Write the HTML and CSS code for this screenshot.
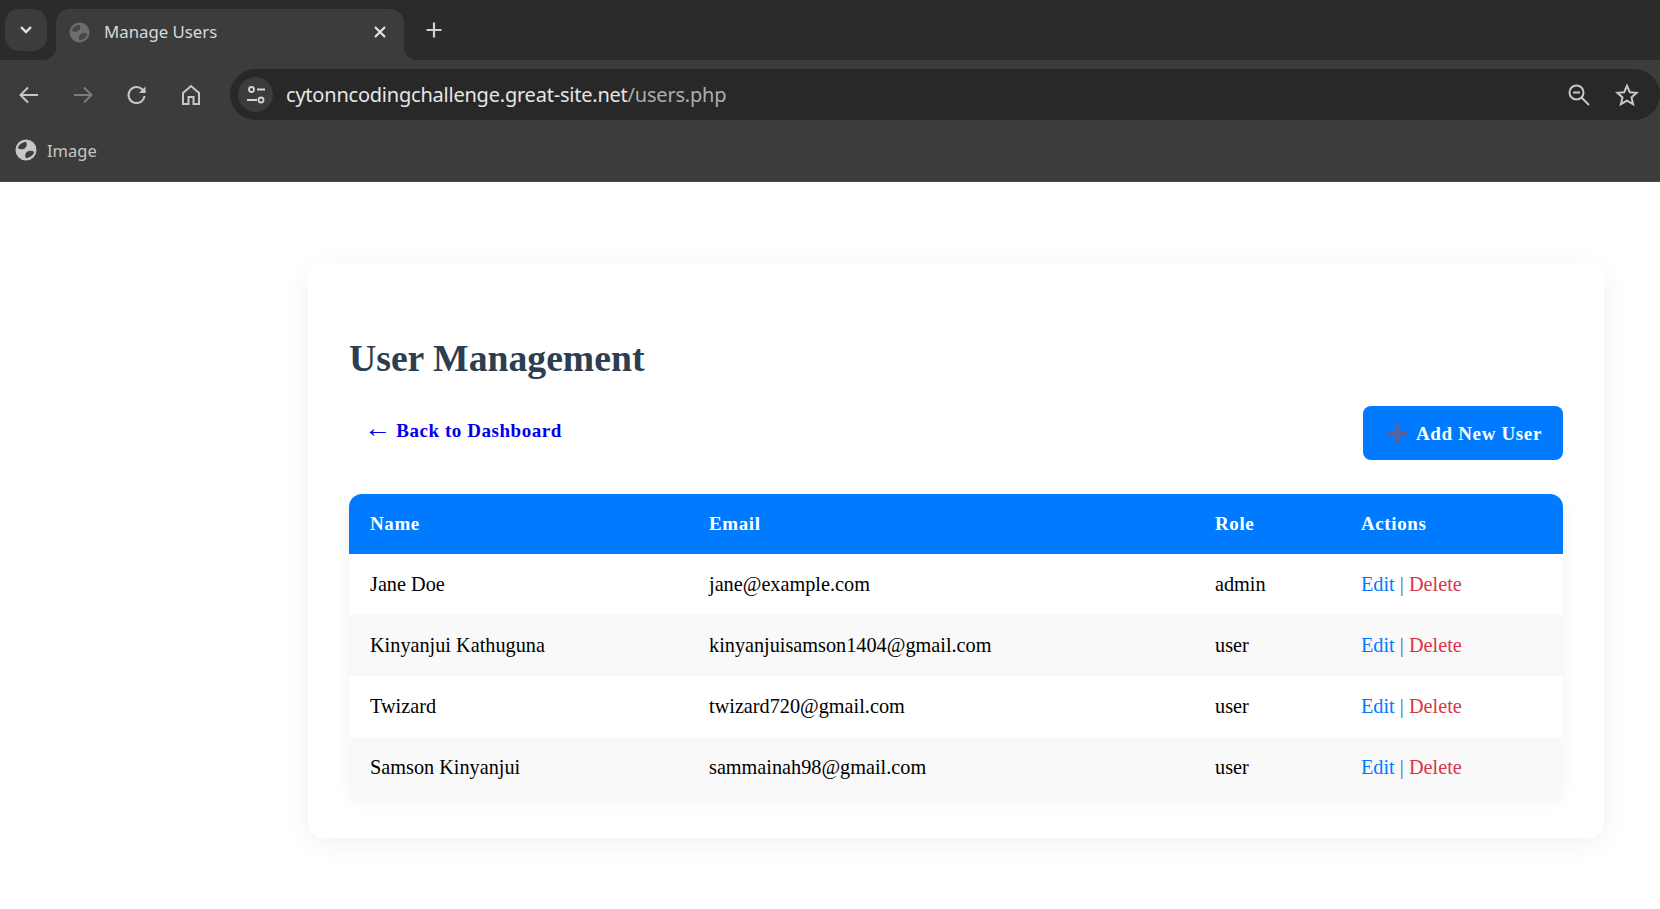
FILE: index.html
```html
<!DOCTYPE html>
<html lang="en">
<head>
<meta charset="utf-8">
<title>Manage Users</title>
<link rel="stylesheet" href="styles.css">
</head>
<body>
<header class="chrome">
  <div class="tabstrip">
    <div class="tab-search">
      <svg class="icon-s" viewBox="0 0 16 16"><path d="M3 5 8 10l5-5" fill="none" stroke="#e3e3e3" stroke-width="2.400"/></svg>
    </div>
    <div class="tab">
      <svg class="favicon" viewBox="0 0 22 22"><circle cx="11" cy="11" r="10.500" fill="#6a6d72"/><path d="M2.800 9C4 5.500 7.500 3.200 11 2.800c1.500 2.700.8 5.300-1.500 6.700-2.200 1.300-4.700 1.100-6.700-.5zM19.200 13c-1.200 3.500-4.700 5.800-8.200 6.200-1.500-2.700-.8-5.300 1.500-6.700 2.200-1.300 4.700-1.100 6.700.5z" fill="#45484b"/></svg>
      <span class="tab-title">Manage Users</span>
      <svg class="tab-close" viewBox="0 0 14 14"><path d="M2 2l10 10M12 2 2 12" stroke="#e3e3e3" stroke-width="2.200"/></svg>
    </div>
    <svg class="newtab" viewBox="0 0 18 18"><path d="M9 1.500v15M1.500 9h15" stroke="#d0d0d0" stroke-width="2.200"/></svg>
  </div>
  <div class="toolbar">
    <div class="nav">
      <svg class="nav-icon" viewBox="0 0 24 24"><path d="M21 12H4M11 4.500 3.500 12l7.500 7.500" fill="none" stroke="#c7c7c7" stroke-width="2"/></svg>
      <svg class="nav-icon" viewBox="0 0 24 24"><path d="M3 12h17M13 4.500l7.500 7.500-7.500 7.500" fill="none" stroke="#7b7b7b" stroke-width="2"/></svg>
      <svg class="nav-icon" viewBox="0 0 24 24"><path d="M19.500 13a8 8 0 1 1-2.200-6.500L20 9" fill="none" stroke="#c7c7c7" stroke-width="2"/><path d="M20.500 3.500v6.500H14z" fill="#c7c7c7"/></svg>
      <svg class="nav-icon" viewBox="0 0 24 24"><path d="M4 21V10l8-7 8 7v11h-5.500v-7h-5v7z" fill="none" stroke="#c7c7c7" stroke-width="2"/></svg>
    </div>
    <div class="omnibox">
      <span class="site-btn">
        <svg class="site-icon" viewBox="0 0 20 20"><circle cx="5.500" cy="4.500" r="2.500" fill="none" stroke="#d5d5d5" stroke-width="1.800"/><path d="M11 4.500h8M1 15h10" stroke="#d5d5d5" stroke-width="1.800"/><circle cx="15" cy="15" r="2.500" fill="none" stroke="#d5d5d5" stroke-width="1.800"/></svg>
      </span>
      <span class="url">cytonncodingchallenge.great-site.net<span class="url-path">/users.php</span></span>
      <svg class="omni-icon zoom-icon" viewBox="0 0 24 24"><circle cx="9.500" cy="9.500" r="7" fill="none" stroke="#c7c7c7" stroke-width="2"/><path d="M6 9.500h7M14.500 14.500l7.500 7.500" stroke="#c7c7c7" stroke-width="2"/></svg>
      <svg class="omni-icon star-icon" viewBox="0 0 24 24"><path d="m12 2.800 2.800 6.400 6.900.6-5.200 4.600 1.600 6.800-6.100-3.600-6.100 3.600 1.600-6.800-5.200-4.600 6.900-.6z" fill="none" stroke="#c7c7c7" stroke-width="2"/></svg>
    </div>
  </div>
  <div class="bookmarks">
    <svg class="bm-icon" viewBox="0 0 22 22"><circle cx="11" cy="11" r="10.500" fill="#c7c7c7"/><path d="M2.800 9C4 5.500 7.500 3.200 11 2.800c1.500 2.700.8 5.300-1.500 6.700-2.200 1.300-4.700 1.100-6.700-.5zM19.200 13c-1.200 3.500-4.700 5.800-8.200 6.200-1.500-2.700-.8-5.300 1.500-6.700 2.200-1.300 4.700-1.100 6.700.5z" fill="#3c3c3c"/></svg>
    <span class="bm-label">Image</span>
  </div>
</header>
<main class="page">
  <section class="card">
    <h1 class="title">User Management</h1>
    <div class="actions-row">
      <a class="back" href="#"><span class="arrow">←</span> Back to Dashboard</a>
      <a class="add-btn" href="#">
        <svg class="plus" viewBox="0 0 20 20"><path d="M10 0v20M0 10h20" stroke="#5f5f9e" stroke-width="4"/></svg>
        Add New User
      </a>
    </div>
    <table class="users">
      <colgroup>
        <col class="c-name"><col class="c-email"><col class="c-role"><col class="c-actions">
      </colgroup>
      <thead>
        <tr><th>Name</th><th>Email</th><th>Role</th><th>Actions</th></tr>
      </thead>
      <tbody>
        <tr><td>Jane Doe</td><td>jane@example.com</td><td>admin</td><td><a class="edit" href="#">Edit</a> <span class="sep">|</span> <a class="del" href="#">Delete</a></td></tr>
        <tr><td>Kinyanjui Kathuguna</td><td>kinyanjuisamson1404@gmail.com</td><td>user</td><td><a class="edit" href="#">Edit</a> <span class="sep">|</span> <a class="del" href="#">Delete</a></td></tr>
        <tr><td>Twizard</td><td>twizard720@gmail.com</td><td>user</td><td><a class="edit" href="#">Edit</a> <span class="sep">|</span> <a class="del" href="#">Delete</a></td></tr>
        <tr><td>Samson Kinyanjui</td><td>sammainah98@gmail.com</td><td>user</td><td><a class="edit" href="#">Edit</a> <span class="sep">|</span> <a class="del" href="#">Delete</a></td></tr>
      </tbody>
    </table>
  </section>
</main>
</body>
</html>
```
FILE: styles.css
```css
* { box-sizing: border-box; }
html, body { margin: 0; height: 100%; }
body { background: #fff; font-family: "Liberation Serif", "Times New Roman", serif; overflow: hidden; }

.chrome { font-family: "Noto Sans", "Open Sans", sans-serif; background: #3c3c3c; border-bottom: 1px solid #4a4a4a; }

.tabstrip { height: 60px; background: #2b2b2b; display: flex; align-items: flex-start; padding: 9px 0 0 5px; }
.tab-search { width: 42px; height: 42px; border-radius: 14px; background: #3c3c3c; display: flex; align-items: center; justify-content: center; }
.icon-s { width: 16px; height: 16px; }
.tab { position: relative; margin-left: 9px; width: 348px; height: 51px; background: #3c3c3c; border-radius: 14px 14px 0 0; display: flex; align-items: center; padding: 0 17px 0 13px; }
.tab::before, .tab::after { content: ""; position: absolute; bottom: 0; width: 14px; height: 14px; }
.tab::before { left: -14px; background: radial-gradient(circle at 0 0, #2b2b2b 14px, #3c3c3c 14.500px); }
.tab::after { right: -14px; background: radial-gradient(circle at 100% 0, #2b2b2b 14px, #3c3c3c 14.500px); }
.favicon { width: 21px; height: 21px; margin-top: -4px; flex: none; }
.tab-title { margin-left: 14px; font-size: 16.800px; color: #d8d8d8; flex: 1; margin-top: -6px; }
.tab-close { width: 14px; height: 14px; margin: -6px 0 0; }
.newtab { width: 18px; height: 18px; margin: 12px 0 0 21px; }

.toolbar { height: 69px; display: flex; align-items: center; padding: 0 0 0 17px; }
.nav { display: flex; gap: 30px; width: 213px; }
.nav-icon { width: 24px; height: 24px; flex: none; }
.omnibox { flex: 1; height: 51px; background: #282828; border-radius: 26px; display: flex; align-items: center; padding: 0 13px 0 8px; }
.site-btn { width: 35px; height: 35px; border-radius: 50%; background: #3c3c3c; display: flex; align-items: center; justify-content: center; flex: none; }
.site-icon { width: 20px; height: 20px; }
.url { margin-left: 13px; flex: 1; font-size: 20px; color: #e6e6e6; letter-spacing: -.22px; white-space: nowrap; }
.url-path { color: #adadad; }
.omni-icon { width: 24px; height: 24px; flex: none; }
.star-icon { margin-left: 24px; margin-right: 8px; }

.bookmarks { height: 55px; display: flex; align-items: center; padding: 0 0 7px 15px; margin-top: -3px; }
.bm-icon { width: 22px; height: 22px; flex: none; }
.bm-label { margin-left: 10px; font-size: 16.500px; color: #c7c7c7; }

.page { padding: 81px 56px 0 308px; }
.card { background: #fff; border-radius: 16px; padding: 72px 41px 40px; box-shadow: 0 5px 26px rgba(0,0,0,.06); }
.title { margin: 0; color: #2c3e50; font-size: 37.700px; line-height: 47px; font-weight: 700; }
.actions-row { margin-top: 24px; display: flex; justify-content: space-between; align-items: flex-start; }
.back { color: #0000ee; font-size: 19px; font-weight: 700; text-decoration: none; padding: 14px 21px 0 15px; letter-spacing: .55px; line-height: 22px; }
.arrow { font-size: 27px; font-weight: 400; line-height: 0; letter-spacing: 0; }
.add-btn { width: 200px; height: 54px; background: #007bff; border-radius: 8px; color: #fff; font-size: 19px; font-weight: 700; text-decoration: none; letter-spacing: .65px; display: flex; align-items: center; gap: 8px; padding: 2px 0 0 25px; }
.plus { width: 20px; height: 20px; flex: none; margin-top: -2px; }

.users { margin-top: 34px; width: 100%; border-collapse: separate; border-spacing: 0; table-layout: fixed; border-radius: 13px; overflow: hidden; box-shadow: 0 4px 16px rgba(0,0,0,.05); font-size: 20.250px; }
.c-name { width: 339px; }
.c-email { width: 506px; }
.c-role { width: 146px; }
.c-actions { width: auto; }
.users th { height: 60px; background: #007bff; color: #fff; text-align: left; padding: 0 21px; font-size: 19px; font-weight: 700; letter-spacing: .6px; }
.users td { height: 61px; padding: 0 21px; color: #000; white-space: nowrap; }
.users tbody tr:nth-child(even) td { background: #f9f9f9; }
.edit { color: #007bff; text-decoration: none; }
.sep { color: #4f6a85; }
.del { color: #dc3545; text-decoration: none; }
```
